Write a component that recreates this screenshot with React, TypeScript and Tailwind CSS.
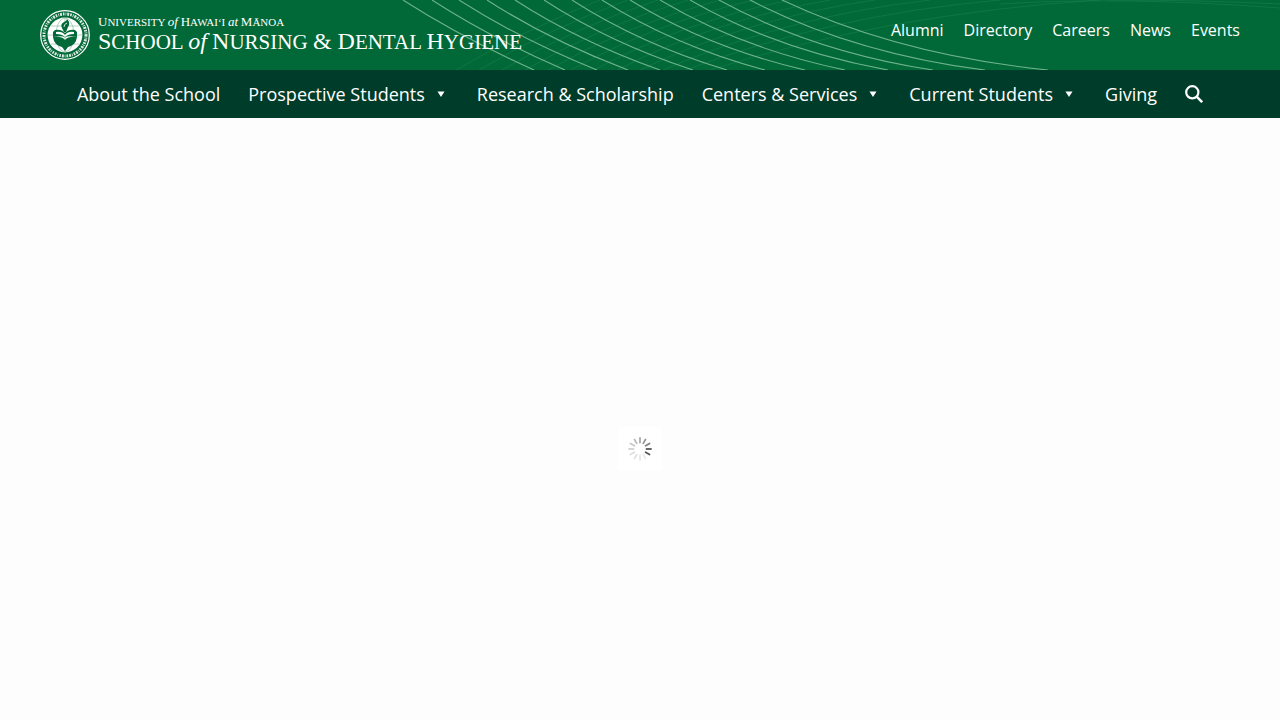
const quickLinks = ["Alumni", "Directory", "Careers", "News", "Events"];

const menu = [
  { label: "About the School" },
  { label: "Prospective Students", children: true },
  { label: "Research & Scholarship" },
  { label: "Centers & Services", children: true },
  { label: "Current Students", children: true },
  { label: "Giving" },
];

// x at the top edge and x at the bottom edge of each pale contour
const contours = [
  [403, 534], [432, 565], [459, 597], [487, 628], [515, 660], [544, 693], [572, 727],
  [602, 765], [630, 805], [660, 845], [690, 888], [719, 933], [750, 985], [782, 1048],
];

// same for the darker contours, which run the other way: bottom x, top x
const faint = [
  [456, 600], [479, 628], [502, 658], [525, 688], [548, 720], [571, 754],
  [594, 790], [617, 830], [640, 875], [663, 930], [686, 1000], [710, 1100],
];

function Waves() {
  return (
    <svg className="absolute inset-y-0 left-0 h-full w-[1280px]" viewBox="0 0 1280 70" fill="none" aria-hidden="true">
      <g stroke="#2a8f5c" strokeOpacity="0.35">
        {faint.map(([x0, x1], i) => (
          <path key={x0} d={`M${x0} 70Q${x0 + (x1 - x0) * 0.46} ${31 - i * 1.6} ${x1} 0`} />
        ))}
        <path d="M1000 4Q1120 -4 1280 8M1110 0Q1200 0 1280 4" />
      </g>
      {contours.map(([x0, x1], i) => {
        const cx = x0 + (x1 - x0) * 0.44;
        const cy = 37 + 18 * Math.pow(i / 13, 1.2);
        return <path key={x0} d={`M${x0} 0Q${cx} ${cy} ${x1} 70`} stroke="#6fb28c" strokeWidth="1.1" />;
      })}
    </svg>
  );
}

function Seal() {
  return (
    <svg className="size-[50px] shrink-0" viewBox="0 0 50 50" aria-hidden="true">
      <circle cx="25" cy="25" r="24.3" fill="none" stroke="#fff" strokeWidth="1.2" />
      <circle cx="25" cy="25" r="21" fill="none" stroke="#fff" strokeWidth="3" strokeDasharray="1.6 1.1 0.8 0.9 2 1" strokeOpacity="0.85" />
      <circle cx="25" cy="25" r="17.4" fill="#fff" />
      <g fill="none" stroke="#006937" strokeWidth="0.5" opacity="0.6">
        <ellipse cx="25" cy="25" rx="9" ry="17" />
        <path d="M8 25h34M25 8v34M11 16h28M11 34h28" />
      </g>
      {/* open book over the leaves */}
      <path d="M15 20q6-1 10 3 4-4 10-3l2 2v5q-12-2-12 1 0-3-12-1v-5z" fill="#006937" />
      <path d="M16 22q6-1 9 3 3-4 9-3v2q-6 0-9 3-3-3-9-3z" fill="#fff" />
      <path d="M13 27q9-1 12 3 3-4 12-3-1 8-9 10l-3 4-3-4q-8-2-9-10z" fill="#006937" />
      {/* torch */}
      <path d="M22 18q-2-4 2-6 3-1 3-3 4 4 1 8l-2 5h-2z" fill="#006937" />
      <path d="M24 17q0-3 3-4" fill="none" stroke="#fff" strokeWidth="0.8" />
    </svg>
  );
}

function Spinner() {
  const shades = [0.5, 0.6, 0.75, 0.9, 1, 0.12, 0.14, 0.18, 0.2, 0.25, 0.32, 0.4];
  return (
    <div className="rounded-sm bg-white p-2.5" role="status" aria-label="Loading">
      <svg className="size-6" viewBox="0 0 24 24">
        {shades.map((o, i) => (
          <path key={i} d="M12 1v4.5" stroke="#555" strokeWidth="1.8" strokeOpacity={o} strokeLinecap="round" transform={`rotate(${i * 30} 12 12)`} />
        ))}
      </svg>
    </div>
  );
}

export default function App() {
  return (
    <div className="flex min-h-screen flex-col bg-[#fdfdfd] font-['Open_Sans',sans-serif] text-white">
      <header>
        <div className="relative overflow-hidden bg-[#006937]">
          <Waves />
          <div className="relative flex items-start justify-between px-10 py-2.5">
            <a href="#" className="flex gap-2 font-['Liberation_Serif',serif] whitespace-nowrap">
              <Seal />
              <span className="block pt-1">
                <span className="block text-[11px] leading-4">
                  <span className="text-[13px]">U</span>NIVERSITY <i className="text-[13px]">of</i>{" "}
                  <span className="text-[13px]">H</span>AWAI‘I <i className="text-[13px]">at</i>{" "}
                  <span className="text-[13px]">M</span>ĀNOA
                </span>
                <span className="block text-[21px] leading-[22px]">
                  <span className="text-2xl leading-[22px]">S</span>CHOOL <i className="text-2xl leading-[22px]">of</i>{" "}
                  <span className="text-2xl leading-[22px]">N</span>URSING <span className="text-2xl leading-[22px]">&amp; D</span>ENTAL{" "}
                  <span className="text-2xl leading-[22px]">H</span>YGIENE
                </span>
              </span>
            </a>
            <nav aria-label="Quick links" className="flex gap-5 pt-2 text-base">
              {quickLinks.map((l) => (
                <a key={l} href="#">{l}</a>
              ))}
            </nav>
          </div>
        </div>
        <nav aria-label="Main" className="flex h-12 items-center justify-center gap-7 bg-[#003c2a] text-lg whitespace-nowrap">
          {menu.map((m) => (
            <a key={m.label} href="#" className="flex items-center">
              {m.label}
              {m.children && (
                <svg className="ml-3 mr-1 h-[6px] w-2" viewBox="0 0 8 6" fill="currentColor" aria-hidden="true">
                  <path d="M.5 .5h7L4 6z" />
                </svg>
              )}
            </a>
          ))}
          <button type="button" aria-label="Search">
            <svg className="size-[18px]" viewBox="0 0 18 18" fill="none" stroke="currentColor" strokeWidth="2.2" aria-hidden="true">
              <circle cx="7.3" cy="7.3" r="6.1" />
              <path d="M11.7 11.7l5.5 5.5" strokeWidth="2.5" />
            </svg>
          </button>
        </nav>
      </header>
      <main className="flex flex-1 items-center justify-center pt-[60px]">
        <Spinner />
      </main>
    </div>
  );
}
